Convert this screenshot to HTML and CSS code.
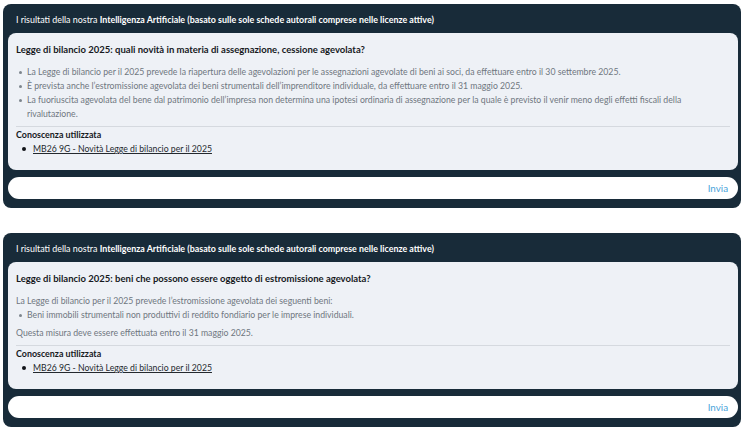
FILE: index.html
```html
<!DOCTYPE html>
<html lang="it">
<head>
<meta charset="utf-8">
<title>Risultati IA</title>
<link rel="stylesheet" href="styles.css">
</head>
<body>
<div class="page">
  <section class="panel">
    <div class="panel-head">I risultati della nostra <b>Intelligenza Artificiale (basato sulle sole schede autorali comprese nelle licenze attive)</b></div>
    <div class="card">
      <div class="question">Legge di bilancio 2025: quali novità in materia di assegnazione, cessione agevolata?</div>
      <ul class="answer-list">
        <li>La Legge di bilancio per il 2025 prevede la riapertura delle agevolazioni per le assegnazioni agevolate di beni ai soci, da effettuare entro il 30 settembre 2025.</li>
        <li>È prevista anche l’estromissione agevolata dei beni strumentali dell’imprenditore individuale, da effettuare entro il 31 maggio 2025.</li>
        <li>La fuoriuscita agevolata del bene dal patrimonio dell’impresa non determina una ipotesi ordinaria di assegnazione per la quale è previsto il venir meno degli effetti fiscali della rivalutazione.</li>
      </ul>
      <div class="knowledge">
        <div class="knowledge-title">Conoscenza utilizzata</div>
        <ul class="knowledge-list">
          <li><a href="#">MB26 9G - Novità Legge di bilancio per il 2025</a></li>
        </ul>
      </div>
    </div>
    <div class="input-bar">
      <span class="input-field"></span>
      <span class="send">Invia</span>
    </div>
  </section>

  <section class="panel">
    <div class="panel-head">I risultati della nostra <b>Intelligenza Artificiale (basato sulle sole schede autorali comprese nelle licenze attive)</b></div>
    <div class="card">
      <div class="question">Legge di bilancio 2025: beni che possono essere oggetto di estromissione agevolata?</div>
      <p class="answer-text">La Legge di bilancio per il 2025 prevede l’estromissione agevolata dei seguenti beni:</p>
      <ul class="answer-list">
        <li>Beni immobili strumentali non produttivi di reddito fondiario per le imprese individuali.</li>
      </ul>
      <p class="answer-text spaced">Questa misura deve essere effettuata entro il 31 maggio 2025.</p>
      <div class="knowledge">
        <div class="knowledge-title">Conoscenza utilizzata</div>
        <ul class="knowledge-list">
          <li><a href="#">MB26 9G - Novità Legge di bilancio per il 2025</a></li>
        </ul>
      </div>
    </div>
    <div class="input-bar">
      <span class="input-field"></span>
      <span class="send">Invia</span>
    </div>
  </section>
</div>
</body>
</html>
```

FILE: styles.css
```css
* { box-sizing: border-box; }
html, body { margin: 0; padding: 0; background: #ffffff; }
body {
  font-family: "Lato", "Liberation Sans", sans-serif;
  font-size: 8.7px;
  line-height: 14px;
  color: #1b1f24;
}
.page {
  display: flex;
  flex-direction: column;
  gap: 25px;
  padding: 4px 2px 0 3px;
}
.panel {
  background: #182b39;
  border-radius: 8px;
  padding: 0 3px 9px 5px;
  display: flex;
  flex-direction: column;
}
.panel-head {
  color: #ffffff;
  font-size: 8.9px;
  padding: 9px 8px 6px;
}
.panel-head b { font-weight: 700; }
.card {
  background: #eef1f6;
  border-radius: 8px;
  padding: 10px 8px 14px;
}
.question {
  font-weight: 700;
  font-size: 9.5px;
  color: #16191d;
  margin-bottom: 8px;
}
.answer-list {
  list-style: none;
  margin: 0;
  padding: 0 0 0 11px;
  color: #6f7780;
}
.answer-list li { position: relative; }
.answer-list li::before {
  content: "";
  position: absolute;
  left: -8px;
  top: 6px;
  width: 3px;
  height: 3px;
  border-radius: 50%;
  background: #7d858d;
}
.answer-text {
  margin: 0;
  color: #6f7780;
}
.answer-text.spaced { margin-top: 4px; }
.knowledge {
  margin-top: 5px;
  border-top: 1px solid #d5d9df;
  padding-top: 1px;
}
.knowledge-title {
  font-weight: 700;
  font-size: 8.9px;
  color: #16191d;
}
.knowledge-list {
  list-style: none;
  margin: 0;
  padding: 0 0 0 17px;
}
.knowledge-list li { position: relative; }
.knowledge-list li::before {
  content: "";
  position: absolute;
  left: -11px;
  top: 5px;
  width: 4px;
  height: 4px;
  border-radius: 50%;
  background: #111418;
}
.knowledge-list a {
  color: #24292e;
  text-decoration: underline;
}
.input-bar {
  margin-top: 7px;
  height: 22px;
  background: #ffffff;
  border-radius: 11px;
  display: flex;
  align-items: center;
  padding: 0 10px 0 12px;
}
.input-field { flex: 1; }
.send {
  color: #4aa4da;
  font-size: 9.8px;
}
```
